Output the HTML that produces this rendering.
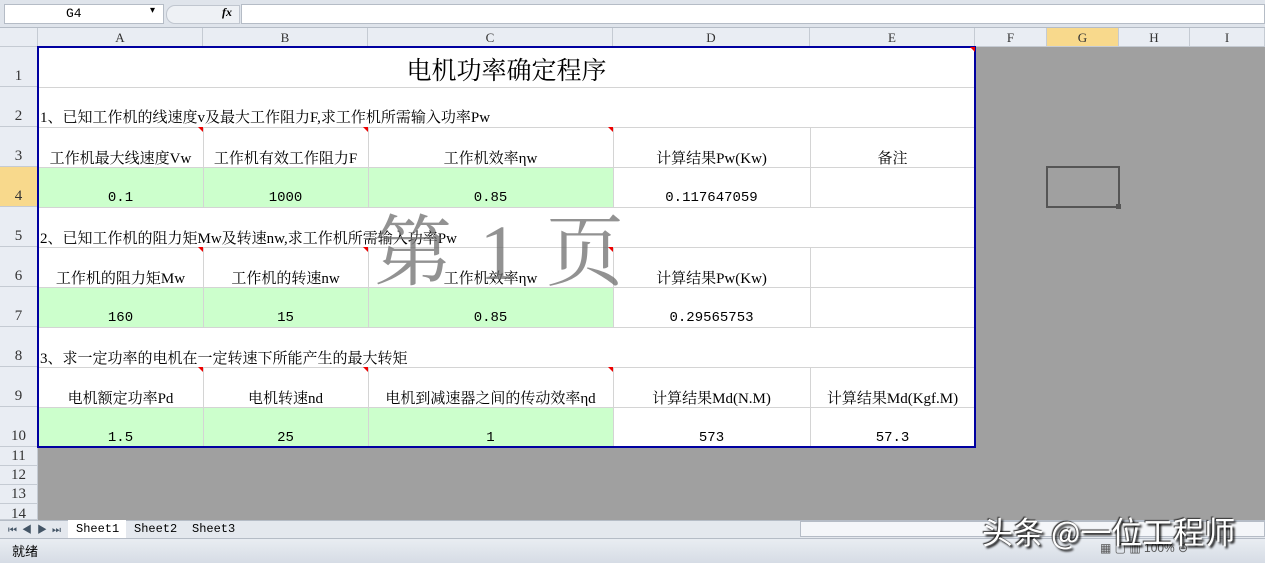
<!DOCTYPE html><html><head><meta charset="utf-8"><style>
*{margin:0;padding:0;box-sizing:border-box}
body{width:1265px;height:563px;overflow:hidden;background:#a0a0a0;font-family:"Liberation Serif","Noto Serif CJK SC",serif;position:relative}
.a{position:absolute}
.t{position:absolute;font-size:15px;color:#000;white-space:nowrap}
.n{font-family:"Liberation Mono",monospace;font-size:14px}
.c{text-align:center}
.rh{position:absolute;left:0;width:38px;background:#e9edf3;border-bottom:1px solid #c5cbd3;border-right:1px solid #c5cbd3;font-size:15px;color:#333;text-align:center;font-family:"Liberation Serif",serif}
.ch{position:absolute;top:28px;height:19px;background:#e9edf3;border-right:1px solid #c5cbd3;border-bottom:1px solid #c5cbd3;font-size:13px;text-align:center;line-height:19px;color:#333}
.g{background:#ccffcc}
.tri{position:absolute;width:0;height:0;border-top:5px solid #e00;border-left:5px solid transparent}
</style></head><body>
<div class="a" style="left:0;top:0;width:1265px;height:28px;background:#dfe4eb;border-bottom:1px solid #b5bcc6"></div>
<div class="a" style="left:4px;top:4px;width:160px;height:20px;background:#fff;border:1px solid #b5bcc6"></div>
<div class="t n" style="left:66px;top:6px;font-size:13px">G4</div>
<div class="t" style="left:150px;top:5px;font-size:10px">▾</div>
<div class="a" style="left:166px;top:5px;width:74px;height:19px;background:#eef1f5;border-radius:9px 0 0 9px;border:1px solid #c0c6cf"></div>
<div class="t" style="left:222px;top:5px;font-size:12px;font-style:italic;font-weight:bold">fx</div>
<div class="a" style="left:241px;top:4px;width:1024px;height:20px;background:#fff;border:1px solid #b5bcc6"></div>
<div class="a" style="left:0;top:28px;width:38px;height:19px;background:#e9edf3;border-right:1px solid #c5cbd3;border-bottom:1px solid #c5cbd3"></div>
<div class="ch" style="left:38px;width:165px">A</div>
<div class="ch" style="left:203px;width:165px">B</div>
<div class="ch" style="left:368px;width:245px">C</div>
<div class="ch" style="left:613px;width:197px">D</div>
<div class="ch" style="left:810px;width:165px">E</div>
<div class="ch" style="left:975px;width:72px">F</div>
<div class="ch" style="left:1047px;width:72px;background:#f8d98c">G</div>
<div class="ch" style="left:1119px;width:71px">H</div>
<div class="ch" style="left:1190px;width:75px">I</div>
<div class="rh" style="top:47px;height:40px;line-height:58px">1</div>
<div class="rh" style="top:87px;height:40px;line-height:58px">2</div>
<div class="rh" style="top:127px;height:40px;line-height:58px">3</div>
<div class="rh" style="top:167px;height:40px;line-height:58px;background:#f8d98c">4</div>
<div class="rh" style="top:207px;height:40px;line-height:58px">5</div>
<div class="rh" style="top:247px;height:40px;line-height:58px">6</div>
<div class="rh" style="top:287px;height:40px;line-height:58px">7</div>
<div class="rh" style="top:327px;height:40px;line-height:58px">8</div>
<div class="rh" style="top:367px;height:40px;line-height:58px">9</div>
<div class="rh" style="top:407px;height:40px;line-height:58px">10</div>
<div class="rh" style="top:447px;height:19px;line-height:19px">11</div>
<div class="rh" style="top:466px;height:19px;line-height:19px">12</div>
<div class="rh" style="top:485px;height:19px;line-height:19px">13</div>
<div class="rh" style="top:504px;height:16px;line-height:20px">14</div>
<div class="a" style="left:38px;top:47px;width:937px;height:400px;background:#fff"></div>
<div class="a g" style="left:38px;top:167px;width:575px;height:40px"></div>
<div class="a g" style="left:38px;top:287px;width:575px;height:40px"></div>
<div class="a g" style="left:38px;top:407px;width:575px;height:40px"></div>
<svg class="a" style="left:38px;top:47px" width="937" height="400">
<g stroke="#d4d4d4" stroke-width="1">
<line x1="0" y1="40.5" x2="937" y2="40.5"/><line x1="0" y1="80.5" x2="937" y2="80.5"/><line x1="0" y1="120.5" x2="937" y2="120.5"/><line x1="0" y1="160.5" x2="937" y2="160.5"/><line x1="0" y1="200.5" x2="937" y2="200.5"/><line x1="0" y1="240.5" x2="937" y2="240.5"/><line x1="0" y1="280.5" x2="937" y2="280.5"/><line x1="0" y1="320.5" x2="937" y2="320.5"/><line x1="0" y1="360.5" x2="937" y2="360.5"/>
<g><line x1="165.5" y1="80" x2="165.5" y2="160"/><line x1="330.5" y1="80" x2="330.5" y2="160"/><line x1="575.5" y1="80" x2="575.5" y2="160"/><line x1="772.5" y1="80" x2="772.5" y2="160"/>
<line x1="165.5" y1="200" x2="165.5" y2="280"/><line x1="330.5" y1="200" x2="330.5" y2="280"/><line x1="575.5" y1="200" x2="575.5" y2="280"/><line x1="772.5" y1="200" x2="772.5" y2="280"/>
<line x1="165.5" y1="320" x2="165.5" y2="400"/><line x1="330.5" y1="320" x2="330.5" y2="400"/><line x1="575.5" y1="320" x2="575.5" y2="400"/><line x1="772.5" y1="320" x2="772.5" y2="400"/></g></g></svg>
<div class="a" style="left:37px;top:46px;width:939px;height:402px;border:2px solid #0000a0"></div>
<div class="tri" style="left:198px;top:127px"></div><div class="tri" style="left:363px;top:127px"></div><div class="tri" style="left:608px;top:127px"></div>
<div class="tri" style="left:198px;top:247px"></div><div class="tri" style="left:363px;top:247px"></div><div class="tri" style="left:608px;top:247px"></div>
<div class="tri" style="left:198px;top:367px"></div><div class="tri" style="left:363px;top:367px"></div><div class="tri" style="left:608px;top:367px"></div>
<div class="tri" style="left:970px;top:47px"></div>
<div class="t c" style="left:38px;width:937px;top:51px;font-size:25px">电机功率确定程序</div>
<div class="t" style="left:40px;top:106px">1、已知工作机的线速度v及最大工作阻力F,求工作机所需输入功率Pw</div>
<div class="t c" style="left:38px;width:165px;top:147px">工作机最大线速度Vw</div>
<div class="t c" style="left:203px;width:165px;top:147px">工作机有效工作阻力F</div>
<div class="t c" style="left:368px;width:245px;top:147px">工作机效率ηw</div>
<div class="t c" style="left:613px;width:197px;top:147px">计算结果Pw(Kw)</div>
<div class="t c" style="left:810px;width:165px;top:147px">备注</div>
<div class="t c n" style="left:38px;width:165px;top:190px">0.1</div>
<div class="t c n" style="left:203px;width:165px;top:190px">1000</div>
<div class="t c n" style="left:368px;width:245px;top:190px">0.85</div>
<div class="t c n" style="left:613px;width:197px;top:190px">0.117647059</div>
<div class="t" style="left:40px;top:227px">2、已知工作机的阻力矩Mw及转速nw,求工作机所需输入功率Pw</div>
<div class="t c" style="left:38px;width:165px;top:267px">工作机的阻力矩Mw</div>
<div class="t c" style="left:203px;width:165px;top:267px">工作机的转速nw</div>
<div class="t c" style="left:368px;width:245px;top:267px">工作机效率ηw</div>
<div class="t c" style="left:613px;width:197px;top:267px">计算结果Pw(Kw)</div>
<div class="t c n" style="left:38px;width:165px;top:310px">160</div>
<div class="t c n" style="left:203px;width:165px;top:310px">15</div>
<div class="t c n" style="left:368px;width:245px;top:310px">0.85</div>
<div class="t c n" style="left:613px;width:197px;top:310px">0.29565753</div>
<div class="t" style="left:40px;top:347px">3、求一定功率的电机在一定转速下所能产生的最大转矩</div>
<div class="t c" style="left:38px;width:165px;top:387px">电机额定功率Pd</div>
<div class="t c" style="left:203px;width:165px;top:387px">电机转速nd</div>
<div class="t c" style="left:368px;width:245px;top:387px">电机到减速器之间的传动效率ηd</div>
<div class="t c" style="left:613px;width:197px;top:387px">计算结果Md(N.M)</div>
<div class="t c" style="left:810px;width:165px;top:387px">计算结果Md(Kgf.M)</div>
<div class="t c n" style="left:38px;width:165px;top:430px">1.5</div>
<div class="t c n" style="left:203px;width:165px;top:430px">25</div>
<div class="t c n" style="left:368px;width:245px;top:430px">1</div>
<div class="t c n" style="left:613px;width:197px;top:430px">573</div>
<div class="t c n" style="left:810px;width:165px;top:430px">57.3</div>
<div class="t" style="left:374px;top:190px;font-size:78px;color:rgba(110,110,110,0.75);letter-spacing:4px">第 1 页</div>
<div class="a" style="left:1046px;top:166px;width:74px;height:42px;border:2px solid #555"></div>
<div class="a" style="left:1116px;top:204px;width:5px;height:5px;background:#555"></div>
<div class="a" style="left:0;top:520px;width:1265px;height:18px;background:#e4e8ee;border-top:1px solid #b5bcc6"></div>
<div class="t" style="left:8px;top:521px;font-size:10px;color:#456;letter-spacing:5px">⏮◀▶⏭</div>
<div class="a" style="left:68px;top:520px;width:58px;height:18px;background:#fff"></div>
<div class="t" style="left:76px;top:522px;font-size:12px;font-family:'Liberation Mono',monospace">Sheet1</div>
<div class="t" style="left:134px;top:522px;font-size:12px;font-family:'Liberation Mono',monospace">Sheet2</div>
<div class="t" style="left:192px;top:522px;font-size:12px;font-family:'Liberation Mono',monospace">Sheet3</div>
<div class="a" style="left:800px;top:521px;width:465px;height:16px;background:#f4f6f9;border:1px solid #b5bcc6"></div>
<div class="a" style="left:0;top:538px;width:1265px;height:25px;background:linear-gradient(#e9edf2,#d6dce5);border-top:1px solid #b5bcc6"></div>
<div class="t" style="left:12px;top:541px;font-size:13px;font-family:'Liberation Sans','Noto Sans CJK SC',sans-serif">就绪</div>
<div class="t" style="left:1100px;top:541px;font-size:12px;color:#555;font-family:'Liberation Sans',sans-serif">▦ ▢ ▥ 100% ⊖</div>
<div class="t" style="left:982px;top:508px;font-size:31px;color:#fff;font-family:'Noto Sans CJK SC',sans-serif;text-shadow:2px 2px 2px #000,-1px -1px 1px #333">头条 @一位工程师</div>
</body></html>
